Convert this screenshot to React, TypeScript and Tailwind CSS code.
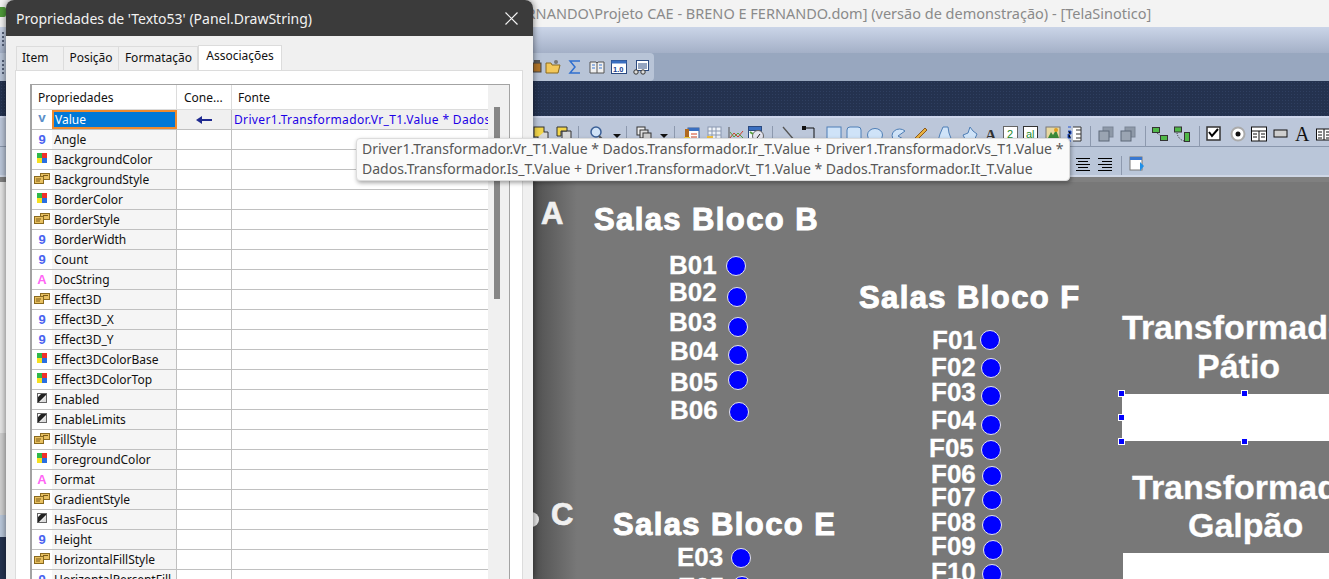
import type { ReactNode } from "react";

const EXPR =
  "Driver1.Transformador.Vr_T1.Value * Dados.Transformador.Ir_T.Value + Driver1.Transformador.Vs_T1.Value * Dados.Transformador.Is_T.Value + Driver1.Transformador.Vt_T1.Value * Dados.Transformador.It_T.Value";

type Kind = "num" | "color" | "enum" | "str" | "bool";

const rows: [string, Kind][] = [
  ["Angle", "num"],
  ["BackgroundColor", "color"],
  ["BackgroundStyle", "enum"],
  ["BorderColor", "color"],
  ["BorderStyle", "enum"],
  ["BorderWidth", "num"],
  ["Count", "num"],
  ["DocString", "str"],
  ["Effect3D", "enum"],
  ["Effect3D_X", "num"],
  ["Effect3D_Y", "num"],
  ["Effect3DColorBase", "color"],
  ["Effect3DColorTop", "color"],
  ["Enabled", "bool"],
  ["EnableLimits", "bool"],
  ["FillStyle", "enum"],
  ["ForegroundColor", "color"],
  ["Format", "str"],
  ["GradientStyle", "enum"],
  ["HasFocus", "bool"],
  ["Height", "num"],
  ["HorizontalFillStyle", "enum"],
  ["HorizontalPercentFill", "num"],
];

/** Little type glyph at the left of each property row. */
function TypeIcon({ kind }: { kind: Kind }) {
  if (kind === "num")
    return <span className="font-['Liberation_Sans',sans-serif] text-[13px] font-bold leading-none text-[#4a62f0]">9</span>;
  if (kind === "str")
    return <span className="font-['Liberation_Sans',sans-serif] text-[13px] font-bold leading-none text-[#ff66f5]">A</span>;
  if (kind === "color")
    return (
      <svg width="10" height="10" viewBox="0 0 10 10">
        <rect width="5" height="5" fill="#2fb84a" />
        <rect x="5" width="5" height="5" fill="#f0302a" />
        <rect y="5" width="5" height="5" fill="#f7e020" />
        <rect x="5" y="5" width="5" height="5" fill="#2a6fe0" />
      </svg>
    );
  if (kind === "enum")
    return (
      <svg width="16" height="11" viewBox="0 0 16 11">
        <rect x="6.5" y="0.5" width="9" height="6" fill="#e8c060" stroke="#8a6a20" />
        <rect x="0.5" y="3.5" width="9" height="7" fill="#e8c060" stroke="#8a6a20" />
        <path d="M2 6h5M2 8h4M9 2.5h5" stroke="#7a5a18" />
      </svg>
    );
  return (
    <svg width="10" height="10" viewBox="0 0 10 10">
      <rect x="0.5" y="0.5" width="9" height="9" fill="#fff" stroke="#666" />
      <path d="M1 9V4L4 1h5v1L2 9z" fill="#222" />
      <path d="M9 3v6H3z" fill="#ddd" />
    </svg>
  );
}

function PropRow({ name, kind }: { name: string; kind: Kind }) {
  return (
    <div className="flex h-[20px] shrink-0 border-b border-[#c0c0c0]">
      <div className="flex w-[20px] shrink-0 items-start justify-center pt-[3px]">
        <TypeIcon kind={kind} />
      </div>
      <div className="w-[125px] shrink-0 overflow-hidden whitespace-nowrap border-r border-[#c0c0c0] bg-[#f5f5f5] pl-[2px] leading-[20px]">
        {name}
      </div>
      <div className="w-[55px] shrink-0 border-r border-[#c0c0c0]" />
      <div className="flex-1" />
    </div>
  );
}

function Dialog() {
  return (
    <div className="absolute left-[6px] top-0 flex h-[579px] w-[527px] flex-col overflow-hidden rounded-t-[8px] bg-[#f0f0f0] font-['Noto_Sans',sans-serif] text-[12px] text-[#111] shadow-[0_0_7px_rgba(0,0,0,0.55)]">
      <div className="flex h-[36px] shrink-0 items-center justify-between bg-[#3b3b3b] pl-[10px] pr-[15px] text-[14px] text-[#f2f2f2]">
        <span>Propriedades de 'Texto53' (Panel.DrawString)</span>
        <svg width="13" height="13" viewBox="0 0 13 13" stroke="#f2f2f2" strokeWidth="1.2">
          <path d="M0.5 0.5l12 12M12.5 0.5l-12 12" />
        </svg>
      </div>
      <div className="flex h-[34px] shrink-0 items-end pl-[10px]">
        <div className="flex h-[24px] w-[48px] items-center border border-b-0 border-[#dcdcdc] pb-[2px] pl-[5px]">Item</div>
        <div className="flex h-[24px] w-[55px] items-center justify-center border border-b-0 border-l-0 border-[#dcdcdc] pb-[2px]">Posição</div>
        <div className="flex h-[24px] w-[79px] items-center justify-center border border-b-0 border-l-0 border-[#dcdcdc] pb-[2px] pl-[1px]">Formatação</div>
        <div className="mb-[-1px] flex h-[26px] w-[84px] items-center justify-center border border-b-0 border-[#dcdcdc] bg-white pb-[5px]">Associações</div>
      </div>
      <div className="ml-[9px] w-[508px] flex-1 border border-[#dcdcdc] bg-white pl-[14px] pt-[13px]">
        <div className="flex h-[520px] w-[480px] border-2 border-r-[1px] border-[#a3a3a3] border-b-0 border-t-[1px]">
          <div className="flex w-[456px] shrink-0 flex-col overflow-hidden">
            <div className="flex h-[25px] shrink-0 border-b border-[#dcdcdc] leading-[25px]">
              <div className="w-[145px] shrink-0 border-r border-[#dcdcdc] pl-[6px]">Propriedades</div>
              <div className="w-[55px] shrink-0 border-r border-[#dcdcdc] pl-[7px]">Cone...</div>
              <div className="pl-[6px]">Fonte</div>
            </div>
            <div className="flex h-[20px] shrink-0 border-b border-[#c0c0c0]">
              <div className="flex w-[20px] shrink-0 items-start justify-center pt-[1px] text-[13px] font-bold leading-[13px] text-[#5b8fc9]">v</div>
              <div className="w-[125px] shrink-0 border-2 border-[#ef8a2e] bg-[#0078d7] pl-[1px] leading-[16px] text-white">Value</div>
              <div className="flex w-[55px] shrink-0 items-center justify-center border-r border-[#c0c0c0] bg-[#f0f0f0]">
                <svg width="16" height="8" viewBox="0 0 16 8">
                  <path d="M0 4l6-4v3h10v2H6v3z" fill="#1f2a90" />
                </svg>
              </div>
              <div className="flex-1 overflow-hidden whitespace-nowrap bg-[#f0f0f0] pl-[2px] leading-[19px] tracking-[0.35px] text-[#1c00e6]">{EXPR}</div>
            </div>
            {rows.map(([name, kind]) => (
              <PropRow key={name} name={name} kind={kind} />
            ))}
          </div>
          <div className="flex-1 bg-[#f0f0f0] pl-[6px] pt-[22px]">
            <div className="h-[192px] w-[6px] bg-[#868686]" />
          </div>
        </div>
      </div>
    </div>
  );
}

// toolbar drawings, 16px box
const icons: Record<string, ReactNode> = {
  front: (
    <>
      <rect x="1" y="1" width="10" height="10" fill="#f3d64a" stroke="#333" />
      <path d="M11 6h4v9H5v-4" fill="#d8d8d8" stroke="#333" />
    </>
  ),
  back: (
    <>
      <path d="M6 5h9v10H6z" fill="#d8d8d8" stroke="#333" />
      <path d="M1 1h10v4H5v5H1z" fill="#f3d64a" stroke="#333" />
    </>
  ),
  zoom: (
    <>
      <circle cx="7" cy="6" r="5" fill="#cfe2f7" stroke="#3a5f96" strokeWidth="1.5" />
      <path d="M10 10l5 5" stroke="#555" strokeWidth="2" />
    </>
  ),
  caret: <path d="M4 8h8l-4 4z" fill="#111" />,
  stack: (
    <>
      <rect x="1" y="1" width="8" height="8" fill="#eee" stroke="#333" />
      <rect x="4" y="4" width="8" height="8" fill="#ddd" stroke="#333" />
      <rect x="7" y="7" width="8" height="8" fill="#ccc" stroke="#333" />
    </>
  ),
  chartList: (
    <>
      <rect x="4" y="2" width="11" height="13" fill="#fff" stroke="#3a5f96" />
      <rect x="4" y="2" width="11" height="3" fill="#3a6fc0" />
      <rect x="1" y="3" width="4" height="9" fill="#b06a20" />
      <path d="M7 8h6M7 11h6" stroke="#d04020" />
      <rect x="0" y="11" width="6" height="5" fill="#f0d040" />
    </>
  ),
  grid: (
    <>
      <rect x="2" y="1" width="13" height="13" fill="#eef2f8" stroke="#8a98b0" />
      <path d="M2 5h13M2 9h13M6 1v13M10 1v13" stroke="#8a98b0" />
      <rect x="1" y="10" width="6" height="6" fill="#f0c040" />
    </>
  ),
  chart: (
    <>
      <path d="M1 1v14h14" stroke="#555" fill="none" />
      <path d="M2 12l4-5 4 4 5-6" stroke="#d0402a" fill="none" />
      <path d="M2 6l4 5 4-4 5 5" stroke="#5aa040" fill="none" />
    </>
  ),
  gauge: (
    <>
      <rect x="0.5" y="0.5" width="13" height="4" fill="#3a6fc0" stroke="#2b4a80" />
      <rect x="0.5" y="4.5" width="13" height="9" fill="#f5f8ff" stroke="#2b4a80" />
      <circle cx="10" cy="10" r="5.5" fill="#e4e4ef" stroke="#666" />
      <path d="M9 12l3-4" stroke="#222" />
      <path d="M2 6l3 2" stroke="#5aa040" strokeWidth="2" />
    </>
  ),
  line: <path d="M2 1l12 14" stroke="#555" strokeWidth="1.3" />,
  conn: (
    <>
      <path d="M2 2h10v14" stroke="#111" fill="none" />
      <rect x="0" y="0" width="4" height="4" fill="#111" />
    </>
  ),
  rect: <rect x="1" y="1" width="14" height="14" fill="#cfe3f8" stroke="#4f7fb6" />,
  round: <rect x="1" y="1" width="14" height="14" rx="3" fill="#cfe3f8" stroke="#4f7fb6" />,
  ellipse: <ellipse cx="8" cy="9" rx="7.5" ry="6.5" fill="#cfe3f8" stroke="#4f7fb6" />,
  pie: <path d="M15 5a7.5 6.5 0 1 0 0 9l-7-4z" fill="#cfe3f8" stroke="#4f7fb6" />,
  pencil: (
    <>
      <path d="M3 12L13 2l2 2L5 14z" fill="#e8b040" stroke="#8a5a20" />
      <path d="M3 12l-2 3 4-1z" fill="#222" />
    </>
  ),
  poly: <path d="M6 1h5l1 6 3 8H1l2-7z" fill="#cfe3f8" stroke="#4f7fb6" />,
  curve: <path d="M8 1l3 4 4 3-3 7H4L1 9l5-2z" fill="#cfe3f8" stroke="#4f7fb6" />,
  textA: <text x="2" y="15" fontFamily="Liberation Serif" fontWeight="700" fontSize="16" fill="#333">A</text>,
  two: (
    <>
      <rect x="0.5" y="0.5" width="14" height="15" fill="#fff" stroke="#666" />
      <text x="4" y="12" fontFamily="Liberation Sans" fontSize="11" fill="#1d8a2c">2</text>
    </>
  ),
  al: (
    <>
      <rect x="0.5" y="0.5" width="14" height="15" fill="#fff" stroke="#333" />
      <text x="3" y="12" fontFamily="Liberation Sans" fontSize="11" fill="#1d8a2c">al</text>
    </>
  ),
  image: (
    <>
      <rect x="1" y="1" width="14" height="14" fill="#e8d8a0" stroke="#777" />
      <path d="M3 12l3-6 2 3 3-5 3 8z" fill="#3a8a3a" />
      <circle cx="11" cy="4" r="2" fill="#e0a020" />
    </>
  ),
  nums: (
    <>
      <path d="M6 1h8v14H6" fill="#fff" stroke="#333" />
      <path d="M9 4h5M9 8h5M9 12h5" stroke="#333" />
      <path d="M1 1h3M1 5h3v3H1v4h3M1 15h3" stroke="#2050d0" />
    </>
  ),
  group: (
    <>
      <rect x="5" y="1" width="10" height="10" fill="#8e99a8" stroke="#7a8596" />
      <rect x="1" y="5" width="10" height="10" fill="#9aa4b2" stroke="#5d6878" />
    </>
  ),
  green: (
    <>
      <rect x="0.5" y="1.5" width="7" height="5" fill="#4fb848" stroke="#333" />
      <rect x="8.5" y="9.5" width="7" height="5" fill="#4fb848" stroke="#333" />
      <path d="M5 7l4 3" stroke="#333" strokeDasharray="1 1" />
    </>
  ),
  green2: (
    <>
      <rect x="0.5" y="1" width="7" height="5" fill="#4fb848" stroke="#333" />
      <rect x="10.5" y="6.5" width="5" height="9" fill="#4fb848" stroke="#333" />
      <path d="M3 7q1 6 7 8" stroke="#333" fill="none" strokeDasharray="1 1" />
    </>
  ),
  check: (
    <>
      <rect x="1" y="1" width="13" height="13" fill="#fff" stroke="#333" strokeWidth="1.5" />
      <path d="M3 6l3 4 6-7" stroke="#000" strokeWidth="2" fill="none" />
    </>
  ),
  radio: (
    <>
      <circle cx="8" cy="8" r="6.5" fill="#fff" stroke="#aaa" strokeWidth="2" />
      <circle cx="8" cy="8" r="2.5" fill="#111" />
    </>
  ),
  list: (
    <>
      <rect x="0.5" y="1" width="15" height="14" fill="#fff" stroke="#111" />
      <path d="M0.5 5h15M8 5v10M2 8h4M2 11h4M10 8h4M10 11h4" stroke="#111" />
    </>
  ),
  button: <rect x="1" y="4" width="13" height="7" fill="#cfcfcf" stroke="#111" />,
  bigA: <text x="0" y="15" fontFamily="Liberation Serif" fontSize="20" fill="#111">A</text>,
  more: (
    <>
      <rect x="0.5" y="3" width="15" height="11" fill="#fff" stroke="#111" />
      <path d="M8 3v11M2 6h4M2 9h4M2 12h4M10 6h4M10 9h4M10 12h4" stroke="#111" />
    </>
  ),
  alignC: <path d="M1 2.5h14M3 5.5h10M1 8.5h14M3 11.5h10M1 14.5h14" stroke="#000" />,
  alignR: <path d="M1 2.5h14M5 5.5h10M1 8.5h14M5 11.5h10M1 14.5h14" stroke="#000" />,
  win: (
    <>
      <rect x="1" y="1" width="12" height="13" fill="#fff" stroke="#777" />
      <rect x="1" y="1" width="12" height="3" fill="#3a78d0" />
      <path d="M11 6l4 4-4 5z" fill="#1f8fe8" />
    </>
  ),
  house: (
    <>
      <rect x="2" y="4" width="8" height="9" fill="#b07428" stroke="#444" />
      <path d="M3 1h6v3H3z" fill="#555" />
    </>
  ),
  folder: (
    <>
      <path d="M1 4h5l1 2h8l-2 8H1z" fill="#f3c85a" stroke="#8a6a20" />
      <circle cx="11" cy="3" r="2" fill="#777" />
    </>
  ),
  sigma: <path d="M13 2H3l5 6-5 6h10" stroke="#2f6fd0" strokeWidth="1.5" fill="none" />,
  book: (
    <>
      <path d="M1 3h6l1 1 1-1h6v11H1z" fill="#f0f0f0" stroke="#555" />
      <path d="M8 4v10" stroke="#555" />
      <path d="M3 6h3M10 6h3M3 9h3M10 9h3" stroke="#3a78d0" />
    </>
  ),
  one: (
    <>
      <rect x="0.5" y="1.5" width="15" height="13" fill="#fff" stroke="#2b4a80" />
      <rect x="0.5" y="1.5" width="15" height="3" fill="#3a6fc0" />
      <text x="2" y="12.5" fontFamily="Liberation Sans" fontWeight="700" fontSize="7.5" fill="#1c3f90">1.0</text>
    </>
  ),
  glasses: (
    <>
      <rect x="3.5" y="1.5" width="12" height="10" fill="#fff" stroke="#2b4a80" />
      <path d="M5 5h9M5 7h9M5 9h9" stroke="#2b4a80" />
      <circle cx="3" cy="13" r="2.2" fill="#ddd" stroke="#333" />
      <circle cx="10" cy="13" r="2.2" fill="#ddd" stroke="#333" />
    </>
  ),
};

function Ico({ name, w }: { name: string; w: string }) {
  return (
    <div className={`${w} shrink-0`}>
      <svg width="16" height="16" viewBox="0 0 16 16" className="overflow-visible">
        {icons[name]}
      </svg>
    </div>
  );
}

function Sep({ w }: { w: string }) {
  return (
    <div className={`${w} shrink-0`}>
      <div className="h-[22px] w-px bg-[#8d99ae]" />
    </div>
  );
}

function Grip() {
  return <div className="h-[14px] w-[2px] bg-[repeating-linear-gradient(180deg,#56627a_0,#56627a_2px,transparent_2px,transparent_4px)]" />;
}

function TopBands() {
  return (
    <>
      <div className="flex h-[27px] shrink-0 items-center whitespace-nowrap bg-[#f3f3f3] font-['Noto_Sans',sans-serif] text-[14.5px] text-[#8a8a8a]">
        <div className="mt-[-4px] h-[10px] w-[6px] shrink-0 rounded-r-[2px] bg-[#4f9a3a]" />
        <span className="ml-[505px]">FERNANDO\Projeto CAE - BRENO E FERNANDO.dom] (versão de demonstração) - [TelaSinotico]</span>
      </div>
      <div className="flex h-[26px] shrink-0 items-start bg-gradient-to-b from-[#cbd5e8] to-[#a4b0c7] pl-[2px] pt-[5px]">
        <Grip />
      </div>
      <div className="flex h-[28px] shrink-0 bg-[#98a7bf]">
        <div className="flex h-[28px] w-[654px] shrink-0 items-center rounded-r-[4px] bg-[#b8c4d7] pl-[2px]">
          <Grip />
          <div className="ml-[527px] flex items-center">
            <Ico name="house" w="w-[14px]" />
            <Ico name="folder" w="w-[22px]" />
            <Ico name="sigma" w="w-[22px]" />
            <Ico name="book" w="w-[22px]" />
            <Ico name="one" w="w-[22px]" />
            <Ico name="glasses" w="w-[16px]" />
          </div>
        </div>
      </div>
      <div className="h-[35px] shrink-0 bg-[#24324f] bg-[radial-gradient(#2f3f60_1px,transparent_1px)] bg-[length:3px_3px]" />
      <div className="flex h-[31px] shrink-0 items-start border-t-2 border-[#cdd5ea] border-b border-b-[#8a97ad] bg-[#bcc7da] pl-[533px] pt-[8px]">
        <Ico name="front" w="w-[23px]" />
        <Ico name="back" w="w-[22px]" />
        <Sep w="w-[11px]" />
        <Ico name="zoom" w="w-[20px]" />
        <Ico name="caret" w="w-[17px]" />
        <Sep w="w-[10px]" />
        <Ico name="stack" w="w-[20px]" />
        <Ico name="caret" w="w-[18px]" />
        <Sep w="w-[10px]" />
        <Ico name="chartList" w="w-[22px]" />
        <Ico name="grid" w="w-[22px]" />
        <Ico name="chart" w="w-[20px]" />
        <Ico name="gauge" w="w-[24px]" />
        <Sep w="w-[9px]" />
        <Ico name="line" w="w-[21px]" />
        <Ico name="conn" w="w-[24px]" />
        <Ico name="rect" w="w-[20px]" />
        <Ico name="round" w="w-[21px]" />
        <Ico name="ellipse" w="w-[23px]" />
        <Ico name="pie" w="w-[22px]" />
        <Ico name="pencil" w="w-[25px]" />
        <Ico name="poly" w="w-[25px]" />
        <Ico name="curve" w="w-[21px]" />
        <Ico name="textA" w="w-[20px]" />
        <Ico name="two" w="w-[20px]" />
        <Ico name="al" w="w-[22px]" />
        <Ico name="image" w="w-[22px]" />
        <Ico name="nums" w="w-[23px]" />
        <Sep w="w-[8px]" />
        <Ico name="group" w="w-[22px]" />
        <Ico name="group" w="w-[25px]" />
        <Sep w="w-[7px]" />
        <Ico name="green" w="w-[22px]" />
        <Ico name="green2" w="w-[25px]" />
        <Sep w="w-[7px]" />
        <Ico name="check" w="w-[24px]" />
        <Ico name="radio" w="w-[21px]" />
        <Ico name="list" w="w-[22px]" />
        <Ico name="button" w="w-[22px]" />
        <Ico name="bigA" w="w-[21px]" />
        <Ico name="more" w="w-[13px]" />
      </div>
      <div className="flex h-[28px] shrink-0 items-start bg-[#bac6d9] pl-[1075px] pt-[9px]">
        <Ico name="alignC" w="w-[22px]" />
        <Ico name="alignR" w="w-[24px]" />
        <Sep w="w-[8px]" />
        <Ico name="win" w="w-[16px]" />
      </div>
      <div className="h-[2px] shrink-0 bg-[#cfd7e6]" />
      <div className="h-[5px] shrink-0 bg-[#808080]" />
    </>
  );
}

const salas = [
  { t: "B01", tc: "left-[137px] top-[70px]", dc: "left-[194px] top-[74px]" },
  { t: "B02", tc: "left-[137px] top-[97px]", dc: "left-[195px] top-[105px]" },
  { t: "B03", tc: "left-[137px] top-[127px]", dc: "left-[196px] top-[135px]" },
  { t: "B04", tc: "left-[138px] top-[156px]", dc: "left-[196px] top-[163px]" },
  { t: "B05", tc: "left-[138px] top-[187px]", dc: "left-[196px] top-[188px]" },
  { t: "B06", tc: "left-[138px] top-[215px]", dc: "left-[197px] top-[220px]" },
  { t: "F01", tc: "left-[400px] top-[145px]", dc: "left-[448px] top-[148px]" },
  { t: "F02", tc: "left-[399px] top-[172px]", dc: "left-[449px] top-[176px]" },
  { t: "F03", tc: "left-[399px] top-[197px]", dc: "left-[449px] top-[204px]" },
  { t: "F04", tc: "left-[399px] top-[225px]", dc: "left-[449px] top-[233px]" },
  { t: "F05", tc: "left-[397px] top-[253px]", dc: "left-[449px] top-[258px]" },
  { t: "F06", tc: "left-[399px] top-[279px]", dc: "left-[450px] top-[284px]" },
  { t: "F07", tc: "left-[399px] top-[302px]", dc: "left-[450px] top-[308px]" },
  { t: "F08", tc: "left-[399px] top-[327px]", dc: "left-[450px] top-[333px]" },
  { t: "F09", tc: "left-[399px] top-[351px]", dc: "left-[451px] top-[358px]" },
  { t: "F10", tc: "left-[399px] top-[377px]", dc: "left-[450px] top-[382px]" },
  { t: "E03", tc: "left-[145px] top-[362px]", dc: "left-[199px] top-[366px]" },
  { t: "E05", tc: "left-[146px] top-[392px]", dc: "left-[200px] top-[394px]" },
];

const heading = "absolute whitespace-nowrap text-[31px] font-bold leading-[34px] tracking-[1.4px] text-white [-webkit-text-stroke:1px_white]";
const big = "absolute whitespace-nowrap text-[34px] font-bold leading-[40px] text-white [-webkit-text-stroke:0.3px_white]";
const handle = "absolute h-[7px] w-[7px] border border-white bg-[#0000ff]";
const letter = "absolute text-[31px] font-bold leading-[32px] text-[#f0f0f0] [-webkit-text-stroke:0.7px_#f0f0f0]";

/** The synoptic screen behind the dialog; items sit at free places on it. */
function Canvas() {
  return (
    <div className="relative flex-1 overflow-hidden bg-[#787878] bg-[radial-gradient(#7f7f7f_0.6px,transparent_0.6px)] bg-[length:10px_10px] font-['Liberation_Sans',sans-serif]">
      <div className="absolute inset-y-0 left-0 w-[45px] bg-gradient-to-r from-[#4f4f4f] to-transparent" />

      <div className={`${letter} left-[9px] top-[16px]`}>A</div>
      <div className={`${letter} left-[19px] top-[317px]`}>C</div>
      <div className="absolute left-[-8px] top-[330px] h-[15px] w-[15px] rounded-full bg-[#e8e8e8]" />

      <div className={`${heading} left-[62px] top-[21px]`}>Salas Bloco B</div>
      <div className={`${heading} left-[327px] top-[99px]`}>Salas Bloco F</div>
      <div className={`${heading} left-[81px] top-[326px]`}>Salas Bloco E</div>

      {salas.map((s) => (
        <div key={s.t}>
          <div className={`absolute text-[26px] font-bold leading-[26px] text-white [-webkit-text-stroke:0.3px_white] ${s.tc}`}>{s.t}</div>
          <div className={`absolute h-[20px] w-[20px] rounded-full border border-[#e4e4f0] bg-[#0000ff] ${s.dc}`} />
        </div>
      ))}

      <div className={`${big} left-[590px] top-[125px]`}>Transformador</div>
      <div className={`${big} left-[665px] top-[164px]`}>Pátio</div>
      <div className="absolute left-[590px] top-[212px] h-[47px] w-[207px] bg-white" />
      <div className={`${handle} left-[586px] top-[208px]`} />
      <div className={`${handle} left-[709px] top-[208px]`} />
      <div className={`${handle} left-[586px] top-[232px]`} />
      <div className={`${handle} left-[586px] top-[256px]`} />
      <div className={`${handle} left-[709px] top-[256px]`} />

      <div className={`${big} left-[600px] top-[285px]`}>Transformador</div>
      <div className={`${big} left-[656px] top-[323px]`}>Galpão</div>
      <div className="absolute left-[591px] top-[371px] h-[40px] w-[206px] bg-white" />
    </div>
  );
}

export default function App() {
  return (
    <div className="relative flex h-[579px] w-[1329px] flex-col overflow-hidden bg-[#f0f0f0]">
      <TopBands />
      <div className="flex min-h-0 flex-1">
        <div className="flex w-[532px] shrink-0 flex-col">
          <div className="h-[251px] shrink-0 bg-[#e6e6e6]" />
          <div className="h-[82px] shrink-0 bg-[#d0d0d0]" />
          <div className="h-[22px] shrink-0 bg-[#b9c7da]" />
          <div className="flex-1 bg-[#24324f]" />
        </div>
        <Canvas />
      </div>

      <Dialog />

      <div className="absolute left-[356px] top-[138px] h-[43px] w-[714px] rounded-[4px] border border-[#dcdcdc] bg-[#fafafa] px-[5px] font-['Noto_Sans',sans-serif] text-[14px] leading-[20px] text-[#575757] shadow-[1px_2px_4px_rgba(0,0,0,0.35)]">
        <div className="whitespace-nowrap">Driver1.Transformador.Vr_T1.Value * Dados.Transformador.Ir_T.Value + Driver1.Transformador.Vs_T1.Value *</div>
        <div className="whitespace-nowrap">Dados.Transformador.Is_T.Value + Driver1.Transformador.Vt_T1.Value * Dados.Transformador.It_T.Value</div>
      </div>
    </div>
  );
}
